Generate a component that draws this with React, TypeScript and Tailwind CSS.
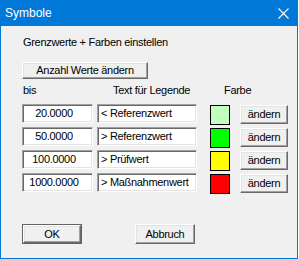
const rows = [
  { value: '20.0000', text: '< Referenzwert', color: 'bg-[#c0ffc0]' },
  { value: '50.0000', text: '> Referenzwert', color: 'bg-[#00ff00]' },
  { value: '100.0000', text: '> Prüfwert', color: 'bg-[#ffff00]' },
  { value: '1000.0000', text: '> Maßnahmenwert', color: 'bg-[#ff0000]' },
];

// classic raised 3D button
const raised =
  'bg-[#f0f0f0] border border-t-white border-l-white border-r-[#696969] border-b-[#696969] shadow-[inset_-1px_-1px_0_#a0a0a0,inset_1px_1px_0_#e3e3e3] flex items-center justify-center text-black';

// sunken edit field
const sunken =
  'bg-white border border-t-[#a0a0a0] border-l-[#a0a0a0] border-r-white border-b-white shadow-[inset_1px_1px_0_#696969,inset_-1px_-1px_0_#e3e3e3] flex items-center';

export default function App() {
  return (
    <div className="w-[299px] h-[259px] bg-white font-['Liberation_Sans',Arial,sans-serif] text-[11px] leading-[13px] tracking-[-0.3px] text-black">
      <div className="w-[298px] h-[259px] flex flex-col bg-[#f0f0f0] border-x border-b border-[#0078d7]">
        {/* Title bar */}
        <div className="h-[26px] -mx-px bg-[#0078d7] flex items-center justify-between pl-[5px] pr-[10px] shrink-0">
          <span className="text-white text-[12px] leading-[14px] tracking-normal">Symbole</span>
          <svg width="11" height="11" viewBox="0 0 11 11" className="mr-[-1px]">
            <path d="M0.5 0.5 L10.5 10.5 M10.5 0.5 L0.5 10.5" stroke="white" strokeWidth="1.1" fill="none" />
          </svg>
        </div>

        <div className="flex flex-col pl-[21px]">
          <div className="mt-[10px] pl-[1px]">Grenzwerte + Farben einstellen</div>

          <button className={`${raised} w-[126px] h-[17px] mt-[13px]`}>Anzahl Werte ändern</button>

          <div className="flex mt-[5px] h-[13px]">
            <span className="w-[91px] pl-[1px]">bis</span>
            <span className="w-[111px]">Text für Legende</span>
            <span>Farbe</span>
          </div>

          <div className="flex flex-col gap-[4px] mt-[7px]">
            {rows.map((r) => (
              <div key={r.value} className="flex items-start h-[19px]">
                <div className={`${sunken} w-[71px] h-[19px] justify-center pr-[7px]`}>{r.value}</div>
                <div className={`${sunken} w-[100px] h-[19px] ml-[4px] pl-[3px]`}>{r.text}</div>
                <div className={`w-[20px] h-[20px] ml-[13px] mt-[1px] border border-black ${r.color}`} />
                <button className={`${raised} w-[48px] h-[19px] ml-[10px] mt-[1px]`}>ändern</button>
              </div>
            ))}
          </div>

          <div className="flex mt-[32px]">
            <div className="w-[60px] h-[20px] border border-[#646464]">
              <button className={`${raised} w-full h-full`}>OK</button>
            </div>
            <button className={`${raised} w-[60px] h-[20px] ml-[53px]`}>Abbruch</button>
          </div>
        </div>
      </div>
    </div>
  );
}
